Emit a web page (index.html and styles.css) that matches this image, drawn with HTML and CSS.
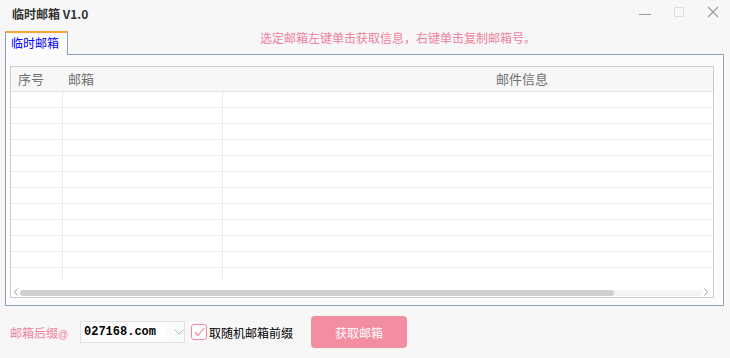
FILE: index.html
```html
<!DOCTYPE html>
<html lang="zh-CN">
<head>
    <meta charset="UTF-8">
    <meta name="viewport" content="width=device-width, initial-scale=1.0">
    <title>临时邮箱 V1.0</title>
    <link rel="stylesheet" href="styles.css">
</head>
<body>
    <div class="window">
        <header class="titlebar">
            <h1 class="app-title">临时邮箱 V1.0</h1>
            <div class="win-controls">
                <span class="win-btn">
                    <svg width="12" height="12" viewBox="0 0 12 12"><path d="M0 8.5h12" stroke="#9a9a9a" stroke-width="1"/></svg>
                </span>
                <span class="win-btn">
                    <svg width="12" height="12" viewBox="0 0 12 12"><rect x="1.5" y="1.5" width="9" height="9" fill="none" stroke="#dedede" stroke-width="1"/></svg>
                </span>
                <span class="win-btn">
                    <svg width="12" height="12" viewBox="0 0 12 12"><path d="M1 1l10 10M11 1L1 11" stroke="#9a9a9a" stroke-width="1.1"/></svg>
                </span>
            </div>
        </header>

        <div class="tab-strip">
            <div class="tab active">临时邮箱</div>
            <p class="hint">选定邮箱左键单击获取信息，右键单击复制邮箱号。</p>
        </div>

        <section class="tab-panel">
            <div class="mail-list">
                <div class="list-scroll">
                    <table class="mail-table">
                        <colgroup>
                            <col class="col-no">
                            <col class="col-mail">
                            <col class="col-info">
                        </colgroup>
                        <thead>
                            <tr><th class="th-no">序号</th><th class="th-mail">邮箱</th><th class="th-info">邮件信息</th></tr>
                        </thead>
                        <tbody>
                            <tr><td></td><td></td><td></td></tr>
                            <tr><td></td><td></td><td></td></tr>
                            <tr><td></td><td></td><td></td></tr>
                            <tr><td></td><td></td><td></td></tr>
                            <tr><td></td><td></td><td></td></tr>
                            <tr><td></td><td></td><td></td></tr>
                            <tr><td></td><td></td><td></td></tr>
                            <tr><td></td><td></td><td></td></tr>
                            <tr><td></td><td></td><td></td></tr>
                            <tr><td></td><td></td><td></td></tr>
                            <tr><td></td><td></td><td></td></tr>
                            <tr class="last-row"><td></td><td></td><td></td></tr>
                        </tbody>
                    </table>
                </div>
                <div class="hscroll">
                    <svg class="arrow" width="6" height="8" viewBox="0 0 6 8"><path d="M4.5 0.5L1.5 4l3 3.5" fill="none" stroke="#a0a0a0" stroke-width="1"/></svg>
                    <div class="track"><div class="thumb"></div></div>
                    <svg class="arrow" width="6" height="8" viewBox="0 0 6 8"><path d="M1.5 0.5L4.5 4l-3 3.5" fill="none" stroke="#a0a0a0" stroke-width="1"/></svg>
                </div>
            </div>
        </section>

        <footer class="toolbar">
            <label class="suffix-label" for="suffix">邮箱后缀<span class="at">@</span></label>
            <div class="select" id="suffix">
                <span class="select-value">027168.com</span>
                <svg class="select-arrow" width="10" height="6" viewBox="0 0 10 6"><path d="M0.5 0.5L5 5l4.5-4.5" fill="none" stroke="#b8b8b8" stroke-width="1"/></svg>
            </div>
            <label class="check">
                <span class="check-box">
                    <svg width="14" height="14" viewBox="0 0 14 14"><path d="M3 7l3 3.5L12 3" fill="none" stroke="#ee8aa0" stroke-width="1.2"/></svg>
                </span>
                <span class="check-text">取随机邮箱前缀</span>
            </label>
            <button type="button" class="fetch-btn">获取邮箱</button>
        </footer>
    </div>
</body>
</html>
```

FILE: styles.css
```css
* {
    margin: 0;
    padding: 0;
    box-sizing: border-box;
}

body {
    font-family: "Noto Sans CJK SC", "Liberation Sans", sans-serif;
    font-size: 12px;
    background-color: #f7f7f7;
    color: #333;
}

.window {
    width: 730px;
    height: 358px;
    overflow: hidden;
}

/* title bar */
.titlebar {
    height: 31px;
    display: flex;
    align-items: center;
    justify-content: space-between;
    padding-left: 12px;
}

.app-title {
    font-size: 12px;
    font-weight: bold;
    color: #333;
    line-height: 14px;
    margin-top: -3px;
}

.win-controls {
    display: flex;
    align-items: center;
    margin-top: -5px;
    padding-right: 11px;
}

.win-btn {
    width: 34px;
    height: 14px;
    display: flex;
    justify-content: flex-end;
}

.win-btn svg {
    display: block;
}

/* tabs */
.tab-strip {
    height: 23px;
    display: flex;
    align-items: flex-end;
    padding-left: 5px;
    position: relative;
    z-index: 1;
}

.tab {
    width: 63px;
    height: 24px;
    margin-bottom: -1px;
    border: 1px solid #8fa2b4;
    border-top: 2px solid #f5a53a;
    border-bottom: none;
    background-color: #fcfcfe;
    color: #0000ff;
    font-size: 12px;
    line-height: 20px;
    padding-left: 5px;
}

.hint {
    color: #f0819d;
    font-size: 12px;
    line-height: 14px;
    padding-left: 192px;
    align-self: flex-start;
}

.tab-panel {
    margin-left: 5px;
    width: 719px;
    height: 252px;
    border: 1px solid #8fa2b4;
    background-color: #fcfcfe;
    padding: 11px 9px 7px 4px;
}

/* list view */
.mail-list {
    width: 704px;
    height: 232px;
    border: 1px solid #cccccc;
    background-color: #fff;
    display: flex;
    flex-direction: column;
}

.list-scroll {
    height: 212px;
    overflow: hidden;
}

.mail-table {
    border-collapse: collapse;
    table-layout: fixed;
    width: 811px;
}

.col-no { width: 51px; }
.col-mail { width: 160px; }
.col-info { width: 600px; }

.mail-table th {
    height: 24px;
    background-color: #f7f7f7;
    border-bottom: 1px solid #e4e4e4;
    color: #707070;
    font-size: 13px;
    font-weight: normal;
    text-align: left;
    line-height: 16px;
    padding-top: 1px;
}

.th-no { padding-left: 7px; }
.th-mail { padding-left: 6px; }
.mail-table .th-info { text-align: center; }

.mail-table td {
    height: 16px;
    border-bottom: 1px solid #ececec;
    border-right: 1px solid #ececec;
}

.mail-table td:last-child {
    border-right: none;
}

.mail-table .last-row td {
    border-bottom: none;
}

.hscroll {
    flex: 1;
    display: flex;
    align-items: flex-end;
    padding: 0 4px 1px 2px;
}

.hscroll .arrow {
    display: block;
}

.track {
    flex: 1;
    height: 6px;
    margin: 0 1px;
    background-color: #f3f3f3;
    border-radius: 3px;
}

.thumb {
    width: 594px;
    height: 6px;
    border-radius: 3px;
    background-color: #cfcfcf;
}

/* bottom toolbar */
.toolbar {
    height: 52px;
    display: flex;
    align-items: center;
    padding-left: 10px;
}

.suffix-label {
    color: #f0819d;
    font-size: 12px;
    white-space: nowrap;
    width: 54px;
}

.suffix-label .at {
    font-family: "Liberation Sans", sans-serif;
    font-size: 10px;
}

.select {
    margin-left: 16px;
    width: 105px;
    height: 22px;
    border: 1px solid #e2e2e2;
    background-color: #fafafa;
    display: flex;
    align-items: center;
    padding-left: 2px;
}

.select-value {
    font-family: "Liberation Mono", monospace;
    font-weight: bold;
    font-size: 12px;
    color: #000;
    background-color: #fff;
    width: 84px;
    height: 14px;
    line-height: 14px;
    padding-left: 1px;
}

.select-arrow {
    display: block;
    margin-left: 7px;
}

.check {
    margin-left: 6px;
    display: flex;
    align-items: center;
}

.check-box {
    width: 16px;
    height: 16px;
    border: 1px solid #ee8aa0;
    border-radius: 3px;
    background-color: #fff;
    display: flex;
    align-items: center;
    justify-content: center;
}

.check-box svg {
    display: block;
}

.check-text {
    margin-left: 2px;
    color: #000;
    font-size: 12px;
}

.fetch-btn {
    margin-left: 18px;
    width: 96px;
    height: 32px;
    border: none;
    border-radius: 4px;
    background-color: #f38da2;
    color: #fff;
    font-family: "Noto Sans CJK SC", sans-serif;
    font-size: 12px;
    cursor: pointer;
}
```
